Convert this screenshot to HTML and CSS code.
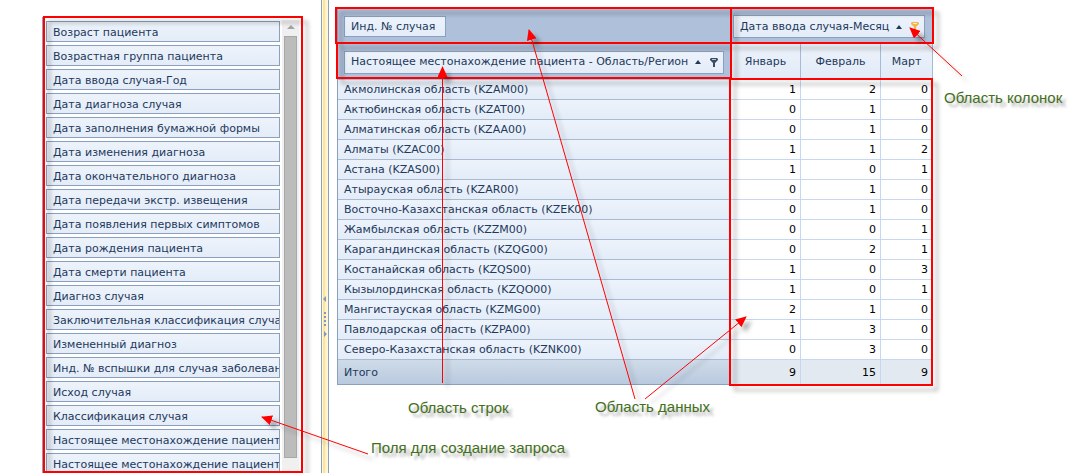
FILE: index.html
```html
<!DOCTYPE html>
<html lang="ru">
<head>
<meta charset="utf-8">
<title>Сводная таблица</title>
<link rel="stylesheet" href="styles.css">
</head>
<body>
<div class="page">
  <aside class="fields">
    <ul class="field-list">
      <li><button class="field" type="button">Возраст пациента</button></li>
      <li><button class="field" type="button">Возрастная группа пациента</button></li>
      <li><button class="field" type="button">Дата ввода случая-Год</button></li>
      <li><button class="field" type="button">Дата диагноза случая</button></li>
      <li><button class="field" type="button">Дата заполнения бумажной формы</button></li>
      <li><button class="field" type="button">Дата изменения диагноза</button></li>
      <li><button class="field" type="button">Дата окончательного диагноза</button></li>
      <li><button class="field" type="button">Дата передачи экстр. извещения</button></li>
      <li><button class="field" type="button">Дата появления первых симптомов</button></li>
      <li><button class="field" type="button">Дата рождения пациента</button></li>
      <li><button class="field" type="button">Дата смерти пациента</button></li>
      <li><button class="field" type="button">Диагноз случая</button></li>
      <li><button class="field" type="button">Заключительная классификация случая</button></li>
      <li><button class="field" type="button">Измененный диагноз</button></li>
      <li><button class="field" type="button">Инд. № вспышки для случая заболевания</button></li>
      <li><button class="field" type="button">Исход случая</button></li>
      <li><button class="field" type="button">Классификация случая</button></li>
      <li><button class="field" type="button">Настоящее местонахождение пациента</button></li>
      <li><button class="field" type="button">Настоящее местонахождение пациента</button></li>
    </ul>
    <div class="scrollbar">
      <svg class="scroll-up" viewBox="0 0 8 4" aria-hidden="true"><path d="M0 4L4 0L8 4Z"/></svg>
      <div class="thumb"></div>
    </div>
  </aside>

  <div class="splitter">
    <svg class="grip" viewBox="0 0 6 42" aria-hidden="true">
      <path d="M4 1V7L1 4ZM2 36V42L5 39Z"/>
      <path d="M2 17h2v2h-2zM2 21h2v2h-2zM2 25h2v2h-2zM2 29h2v2h-2z"/>
    </svg>
  </div>

  <main class="workspace">
    <table class="pivot">
      <thead>
        <tr class="areas">
          <th class="area"><button class="chip" type="button">Инд. № случая</button></th>
          <th class="area area-columns" colspan="3">
            <button class="chip tall" type="button">Дата ввода случая-Месяц
              <svg class="sort" viewBox="0 0 6 4" aria-hidden="true"><path d="M0 4L3 0L6 4Z"/></svg>
              <svg class="filter active" viewBox="0 0 8 9" aria-hidden="true"><path d="M1 0h6l1 1v1L5 5v4H3V5L0 2V1Z"/><path class="hole" d="M2 1h4v1H2z"/></svg>
            </button>
          </th>
        </tr>
        <tr class="areas levels">
          <th class="area">
            <button class="chip tall" type="button">Настоящее местонахождение пациента - Область/Регион
              <svg class="sort" viewBox="0 0 6 4" aria-hidden="true"><path d="M0 4L3 0L6 4Z"/></svg>
              <svg class="filter" viewBox="0 0 8 9" aria-hidden="true"><path d="M1 0h6l1 1v1L5 5v4H3V5L0 2V1Z"/><path class="hole" d="M2 1h4v1H2z"/></svg>
            </button>
          </th>
          <th class="month january" scope="col">Январь</th>
          <th class="month february" scope="col">Февраль</th>
          <th class="month march" scope="col">Март</th>
        </tr>
      </thead>
      <tbody>
        <tr><th scope="row">Акмолинская область (KZAM00)</th><td>1</td><td>2</td><td>0</td></tr>
        <tr><th scope="row">Актюбинская область (KZAT00)</th><td>0</td><td>1</td><td>0</td></tr>
        <tr><th scope="row">Алматинская область (KZAA00)</th><td>0</td><td>1</td><td>0</td></tr>
        <tr><th scope="row">Алматы (KZAC00)</th><td>1</td><td>1</td><td>2</td></tr>
        <tr><th scope="row">Астана (KZAS00)</th><td>1</td><td>0</td><td>1</td></tr>
        <tr><th scope="row">Атырауская область (KZAR00)</th><td>0</td><td>1</td><td>0</td></tr>
        <tr><th scope="row">Восточно-Казахстанская область (KZEK00)</th><td>0</td><td>1</td><td>0</td></tr>
        <tr><th scope="row">Жамбылская область (KZZM00)</th><td>0</td><td>0</td><td>1</td></tr>
        <tr><th scope="row">Карагандинская область (KZQG00)</th><td>0</td><td>2</td><td>1</td></tr>
        <tr><th scope="row">Костанайская область (KZQS00)</th><td>1</td><td>0</td><td>3</td></tr>
        <tr><th scope="row">Кызылординская область (KZQO00)</th><td>1</td><td>0</td><td>1</td></tr>
        <tr><th scope="row">Мангистауская область (KZMG00)</th><td>2</td><td>1</td><td>0</td></tr>
        <tr><th scope="row">Павлодарская область (KZPA00)</th><td>1</td><td>3</td><td>0</td></tr>
        <tr><th scope="row">Северо-Казахстанская область (KZNK00)</th><td>0</td><td>3</td><td>0</td></tr>
      </tbody>
      <tfoot>
        <tr><th scope="row">Итого</th><td>9</td><td>15</td><td>9</td></tr>
      </tfoot>
    </table>
  </main>

  <svg class="callouts" width="1068" height="473" viewBox="0 0 1068 473" aria-hidden="true">
    <defs>
      <marker id="head" markerUnits="userSpaceOnUse" markerWidth="11" markerHeight="10" refX="10" refY="5" orient="auto">
        <path d="M0 0L11 5L0 10Z" fill="#f00"/>
      </marker>
    </defs>
    <g class="frames">
      <rect x="44" y="17" width="258" height="455"/>
      <rect x="336" y="8" width="395" height="35"/>
      <rect x="731" y="8" width="202" height="35"/>
      <rect x="337" y="43" width="394" height="35"/>
      <rect x="730" y="79" width="202" height="306"/>
    </g>
    <g class="arrows">
      <path d="M368 454L262 417"/>
      <path d="M442.5 383V67"/>
      <path d="M635 399L529 30"/>
      <path d="M645 399L746 317"/>
      <path d="M962 76L910 28"/>
    </g>
  </svg>
  <span class="note note-columns">Область колонок</span>
  <span class="note note-rows">Область строк</span>
  <span class="note note-data">Область данных</span>
  <span class="note note-fields">Поля для создание запроса</span>
</div>
</body>
</html>
```

FILE: styles.css
```css
* {
  box-sizing: border-box;
}

body {
  margin: 0;
  background: #fff;
  color: #1e395b;
  font: 11px/14px "DejaVu Sans", Verdana, sans-serif;
}

button {
  font: inherit;
  color: inherit;
  margin: 0;
}

.page {
  position: relative;
  display: flex;
  height: 100vh;
  overflow: hidden;
}

/* Field list */
.fields {
  display: flex;
  gap: 2px;
  width: 260px;
  margin: 17px 19px 0 42px;
  padding: 2px 2px 0 3px;
  border: 1px solid #8ba0bc;
  border-bottom: 0;
  overflow: hidden;
}

.field-list {
  flex: 1;
  min-width: 0;
  margin: 0;
  padding: 1px 0 0;
  list-style: none;
  display: flex;
  flex-direction: column;
  gap: 3px;
}

.field-list li {
  display: flex;
}

.field {
  width: 100%;
  height: 21px;
  padding: 2px 0 0 6px;
  border: 1px solid #8ba0bc;
  background: linear-gradient(#edf3fb, #e3ecf8);
  text-align: left;
  white-space: nowrap;
  overflow: hidden;
}

.scrollbar {
  width: 17px;
  padding: 5px 2px 15px;
  background: #f0f0f0;
  display: flex;
  flex-direction: column;
  align-items: center;
  gap: 7px;
}

.scroll-up {
  width: 8px;
  height: 4px;
  fill: #a3a3a3;
}

.thumb {
  flex: 1;
  width: 13px;
  border: 1px solid #a8a8a8;
  background: #bcbcbc;
}

/* Splitter */
.splitter {
  display: flex;
  align-items: flex-start;
  justify-content: center;
  width: 8px;
  padding-top: 295px;
  border: 1px solid #8ba0bc;
  border-width: 0 1px;
  background: linear-gradient(90deg, #fff8e0 1px, #ffe79b 1px, #ffe08b 3px, #fff0c4 3px, #fff8e0);
}

.grip {
  width: 6px;
  height: 42px;
  fill: #7f9ac0;
}

/* Pivot table */
.workspace {
  flex: 1;
  padding: 9px 8px;
}

.pivot {
  border-collapse: separate;
  border-spacing: 0;
  border: 1px solid #8ba0bc;
  border-width: 0 0 1px 1px;
}

.pivot th {
  font-weight: normal;
  text-align: left;
}

.areas {
  height: 35px;
}

.levels {
  height: 36px;
}

.area {
  width: 393px;
  padding: 0 6px;
  background: #afc0da;
}

.area-columns {
  width: 202px;
  padding: 0 2px;
}

.chip {
  display: flex;
  align-items: center;
  min-width: 102px;
  height: 21px;
  padding: 0 6px;
  border: 1px solid #8ba0bc;
  background: linear-gradient(#edf3fb, #e3ecf8);
  white-space: nowrap;
}

.chip.tall {
  height: 23px;
  padding-right: 5px;
}

.sort {
  width: 6px;
  height: 4px;
  margin: 0 9px 0 7px;
  fill: #1e395b;
}

.filter {
  width: 8px;
  height: 9px;
  fill: #3b4c66;
}

.filter .hole {
  fill: #b9c6da;
}

.filter.active {
  fill: #f3b64e;
}

.filter.active .hole {
  fill: #fff0cc;
}

.pivot .month {
  padding: 0;
  border-right: 1px solid #a5b9d8;
  background: linear-gradient(#edf3fb, #e1eaf7);
  text-align: center;
}

.january {
  width: 70px;
}

.february {
  width: 80px;
}

.march {
  width: 52px;
}

.pivot tbody th {
  height: 20px;
  padding: 1px 6px 0;
  border-bottom: 1px solid #a9bbd3;
  background: linear-gradient(#edf3fb, #e3ecf8);
}

.pivot td {
  padding: 1px 4px 0;
  border: 1px solid #c5d7f2;
  border-width: 0 1px 1px 0;
  color: #000;
  text-align: right;
}

.pivot tfoot th {
  height: 24px;
  padding: 2px 6px 0;
  background: linear-gradient(#cfdbe8, #b9cadf);
}

.pivot tfoot td {
  padding-top: 2px;
  border-bottom: 0;
  background: #e3e9f1;
}

/* Callouts */
.callouts {
  position: absolute;
  top: 0;
  left: 0;
  pointer-events: none;
}

.frames,
.arrows {
  fill: none;
  stroke: #f00;
  filter: drop-shadow(5px 5px 2px rgba(0, 0, 0, 0.3));
}

.frames {
  stroke-width: 2px;
}

.arrows path {
  stroke-width: 1px;
  marker-end: url(#head);
}

.note {
  position: absolute;
  color: #44701c;
  font: 15px/18px "Liberation Sans", Arial, sans-serif;
  white-space: nowrap;
  text-shadow: 4px 4px 3px rgba(0, 0, 0, 0.3);
}

.note-columns {
  left: 944px;
  top: 89px;
}

.note-rows {
  left: 408px;
  top: 399px;
}

.note-data {
  left: 595px;
  top: 398px;
}

.note-fields {
  left: 371px;
  top: 439px;
}
```
